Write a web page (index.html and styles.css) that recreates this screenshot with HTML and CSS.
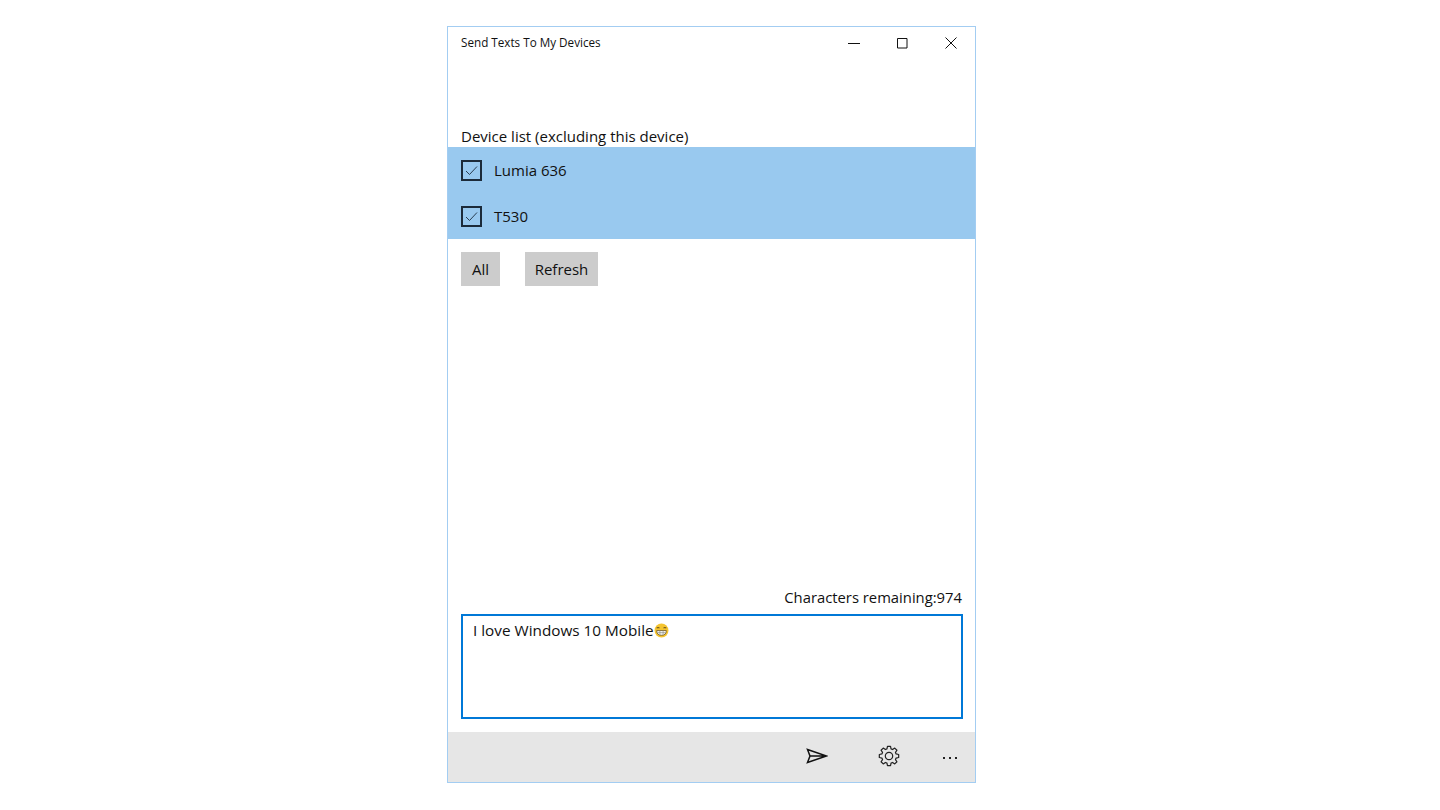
FILE: index.html
```html
<!DOCTYPE html>
<html lang="en">
<head>
<meta charset="utf-8">
<title>Send Texts To My Devices</title>
<link rel="stylesheet" href="styles.css">
</head>
<body>
<main class="window">
  <header class="titlebar">
    <span class="title">Send Texts To My Devices</span>
    <div class="caption">
      <span class="cap"><svg width="12" height="12" viewBox="0 0 12 12"><path d="M0 6.500h12" stroke="#111" fill="none"/></svg></span>
      <span class="cap"><svg width="12" height="12" viewBox="0 0 12 12"><path d="M1.500 1.500h9.500v9.500h-9.500z" stroke="#111" fill="none"/></svg></span>
      <span class="cap"><svg width="12" height="12" viewBox="0 0 12 12"><path d="M.5.500l11 11M11.500.500l-11 11" stroke="#111" fill="none"/></svg></span>
    </div>
  </header>
  <div class="label">Device list (excluding this device)</div>
  <ul class="devices">
    <li class="device">
      <span class="check"><svg width="17" height="17" viewBox="0 0 17 17"><path d="M3 9l3.500 3.500L14 4.500" stroke="#2b3f52" fill="none"/></svg></span>
      <span>Lumia 636</span>
    </li>
    <li class="device">
      <span class="check"><svg width="17" height="17" viewBox="0 0 17 17"><path d="M3 9l3.500 3.500L14 4.500" stroke="#2b3f52" fill="none"/></svg></span>
      <span>T530</span>
    </li>
  </ul>
  <div class="actions">
    <button class="btn btn-all">All</button>
    <button class="btn btn-refresh">Refresh</button>
  </div>
  <div class="spacer"></div>
  <div class="counter">Characters remaining:974</div>
  <div class="textbox">I love Windows 10 Mobile<svg class="emoji" width="15" height="15" viewBox="0 0 14 14"><circle cx="7" cy="7" r="6.500" fill="#f4c430"/><path d="M2.500 4.800q1.300-1.300 2.600 0M8.900 4.800q1.300-1.300 2.600 0" stroke="#6b5320" fill="none"/><path d="M2.500 7h9q0 4.500-4.500 4.500T2.500 7z" fill="#f2f2ee" stroke="#6b5320" stroke-width=".7"/><path d="M3 9h8M5.500 7v4M8.500 7v4" stroke="#8a8a80" stroke-width=".6"/></svg></div>
  <footer class="appbar">
    <span class="tool tool-send"><svg width="22" height="16" viewBox="0 0 22 16"><path d="M1.500 1.500L20.500 8 1.500 14.500 4 8zM4 8h16.500" stroke="#111" stroke-width="1.500" fill="none"/></svg></span>
    <span class="tool"><svg width="22" height="22" viewBox="0 0 22 22"><g fill="none" stroke="#222" stroke-width="1.200" stroke-linejoin="round"><circle cx="11" cy="11" r="3.700"/><path d="M9.470 1.320H12.530L13.040 3.890 14.590 4.530 16.760 3.070 18.930 5.240 17.470 7.410 18.110 8.960 20.680 9.470V12.530L18.110 13.040 17.470 14.590 18.930 16.760 16.760 18.930 14.590 17.470 13.040 18.110 12.530 20.680H9.470L8.960 18.110 7.410 17.470 5.240 18.930 3.070 16.760 4.530 14.590 3.890 13.040 1.320 12.530V9.470L3.890 8.960 4.530 7.410 3.070 5.240 5.240 3.070 7.410 4.530 8.960 3.890z"/></g></svg></span>
    <span class="tool more"><i class="dot"></i><i class="dot"></i><i class="dot"></i></span>
  </footer>
</main>
</body>
</html>
```

FILE: styles.css
```css
* { box-sizing: border-box; }
html, body { margin: 0; height: 810px; background: #fff; overflow: hidden; }
body {
  display: flex;
  justify-content: flex-start;
  align-items: flex-start;
  padding-top: 26px;
  padding-left: 447px;
  font-family: "Open Sans", "Noto Sans", sans-serif;
  font-size: 15px;
  color: #111;
}
.window {
  width: 529px;
  height: 757px;
  border: 1px solid #a3cdf2;
  display: flex;
  flex-direction: column;
  background: #fff;
}
.titlebar {
  height: 32px;
  flex: none;
  display: flex;
  align-items: center;
  justify-content: space-between;
  padding-left: 13px;
}
.title { font-size: 11.700px; line-height: 31px; height: 32px; }
.caption { display: flex; }
.cap {
  width: 48.500px;
  height: 32px;
  display: flex;
  align-items: center;
  justify-content: center;
}
.cap svg { display: block; }
.label {
  margin-top: 67px;
  height: 21px;
  line-height: 20px;
  padding-left: 13px;
  flex: none;
}
.devices {
  list-style: none;
  margin: 0;
  padding: 0;
  background: #99c9ef;
  height: 92px;
  flex: none;
}
.device {
  height: 46px;
  display: flex;
  align-items: center;
  padding-left: 13px;
  gap: 12px;
}
.check {
  width: 21px;
  height: 21px;
  border: 2px solid #1c2b3a;
  display: flex;
  align-items: center;
  justify-content: center;
  flex: none;
}
.check svg { display: block; }
.actions {
  display: flex;
  gap: 25px;
  padding: 13px 0 0 13px;
  flex: none;
}
.btn {
  height: 34px;
  padding: 0;
  border: 0;
  background: #ccc;
  color: #111;
  font: inherit;
}
.btn-all { width: 39px; }
.btn-refresh { width: 73px; }
.spacer { flex: 1; }
.counter {
  text-align: right;
  padding-right: 13px;
  height: 20px;
  line-height: 20px;
  font-size: 14.800px;
  margin-bottom: 7px;
  flex: none;
}
.textbox {
  margin: 0 12px 0 13px;
  height: 105px;
  border: 2px solid #0078d7;
  padding: 4px 10px;
  line-height: 20px;
  font-size: 15.300px;
  flex: none;
}
.emoji { vertical-align: -2px; }
.appbar {
  margin-top: 13px;
  height: 50px;
  background: #e6e6e6;
  display: flex;
  justify-content: flex-end;
  align-items: center;
  flex: none;
}
.tool {
  width: 71px;
  height: 50px;
  padding-bottom: 2px;
  display: flex;
  align-items: center;
  justify-content: center;
}
.tool-send { padding-right: 2px; }
.tool svg { display: block; }
.more { width: 51px; gap: 4px; padding-top: 1px; padding-bottom: 0; }
.dot { width: 2px; height: 2px; background: #222; display: block; }
```
